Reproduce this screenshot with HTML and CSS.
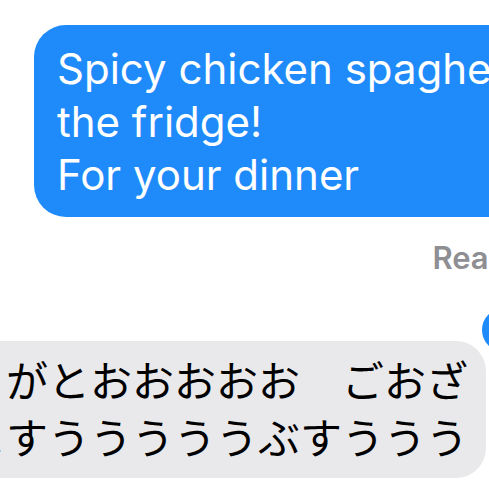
FILE: index.html
```html
<!DOCTYPE html>
<html lang="ja">
<head>
  <meta charset="UTF-8" />
  <meta name="viewport" content="width=device-width, initial-scale=1" />
  <title>Messages</title>
  <link rel="stylesheet" href="styles.css">
</head>
<body>
  <div class="thread">
    <div class="bubble sent">Spicy chicken spaghetti in<br>the fridge!<br>For your dinner</div>
    <div class="status">Read</div>
    <div class="bubble received">
      ありがとおおおおお　ごおざ<br>いますうううううぶすううう
      <span class="tapback"></span>
    </div>
  </div>
</body>
</html>
```

FILE: styles.css
```css
html, body {
  margin: 0;
  padding: 0;
  background: #fff;
  overflow: hidden;
  height: 489px;
}
.thread {
  width: 489px;
  padding-top: 25px;
}
.bubble {
  white-space: nowrap;
}
.sent {
  margin-left: 34px;
  width: 600px;
  box-sizing: border-box;
  padding: 17px 0 16px 23px;
  background: #1f8bfa;
  color: #fff;
  border-radius: 32px;
  font-family: Inter, "Liberation Sans", sans-serif;
  font-size: 42px;
  line-height: 53px;
}
.status {
  margin-top: 22px;
  margin-right: -19px;
  text-align: right;
  color: #8e8e93;
  font-family: Inter, "Liberation Sans", sans-serif;
  font-weight: 600;
  font-size: 31px;
  line-height: 38px;
}
.received {
  position: relative;
  margin-top: 64px;
  margin-left: -95px;
  width: 581px;
  box-sizing: border-box;
  padding: 9px 14px 14px 17px;
  background: #e9e9eb;
  color: #000;
  border-radius: 30px;
  font-family: "Noto Sans CJK JP", sans-serif;
  font-size: 42px;
  line-height: 57px;
}
.tapback {
  position: absolute;
  top: -36px;
  right: -43px;
  width: 44px;
  height: 44px;
  border-radius: 50%;
  background: #1f8bfa;
  border: 3px solid #fff;
}
```
